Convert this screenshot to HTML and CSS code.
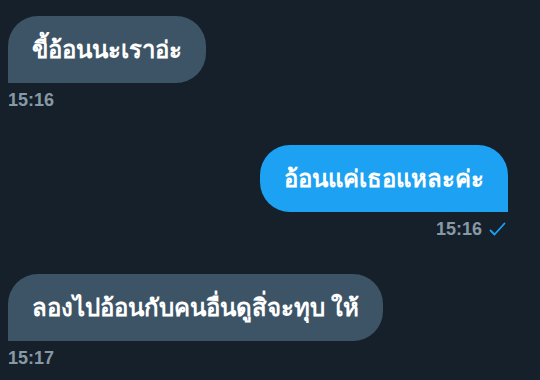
FILE: index.html
```html
<!DOCTYPE html>
<html lang="th">
<head>
    <meta charset="UTF-8">
    <meta name="viewport" content="width=device-width, initial-scale=1.0">
    <title>Chat</title>
    <link rel="stylesheet" href="styles.css">
</head>
<body>

<div class="chat">
    <div class="message received">
        <div class="bubble">ขี้อ้อนนะเราอ่ะ</div>
        <div class="meta">15:16</div>
    </div>

    <div class="message sent">
        <div class="bubble">อ้อนแค่เธอแหละค่ะ</div>
        <div class="meta">
            15:16
            <svg class="tick" width="17" height="15" viewBox="0 0 17 15">
                <path d="M1.5 8.5 L5.5 12.5 L15.5 1.5" fill="none" stroke="#1da1f2" stroke-width="1.8" stroke-linecap="round" stroke-linejoin="round"/>
            </svg>
        </div>
    </div>

    <div class="message received">
        <div class="bubble">ลองไปอ้อนกับคนอื่นดูสิ่จะทุบ ให้</div>
        <div class="meta">15:17</div>
    </div>
</div>

</body>
</html>
```

FILE: styles.css
```css
html, body {
    margin: 0;
    height: 100%;
    background-color: #15202b;
}
body {
    font-family: "Noto Sans", "DejaVu Sans", sans-serif;
    overflow: hidden;
}
.chat {
    display: flex;
    flex-direction: column;
    gap: 34px;
    padding: 16px 32px 0 8px;
}
.message {
    display: flex;
    flex-direction: column;
}
.message.received {
    align-items: flex-start;
}
.message.sent {
    align-items: flex-end;
}
.bubble {
    height: 67px;
    box-sizing: border-box;
    display: flex;
    align-items: center;
    padding: 0 24px;
    color: #ffffff;
    font-size: 24px;
    font-weight: bold;
    border-radius: 30px;
    white-space: pre;
}
.received .bubble {
    background-color: #3d5466;
    border-bottom-left-radius: 0;
}
.sent .bubble {
    background-color: #1da1f2;
    border-bottom-right-radius: 0;
}
.meta {
    display: flex;
    align-items: center;
    gap: 7px;
    margin-top: 6px;
    height: 22px;
    color: #8899a6;
    font-family: "Liberation Sans", Arial, sans-serif;
    font-size: 18px;
    font-weight: bold;
}
.sent .meta {
    margin-right: 2px;
}
```
